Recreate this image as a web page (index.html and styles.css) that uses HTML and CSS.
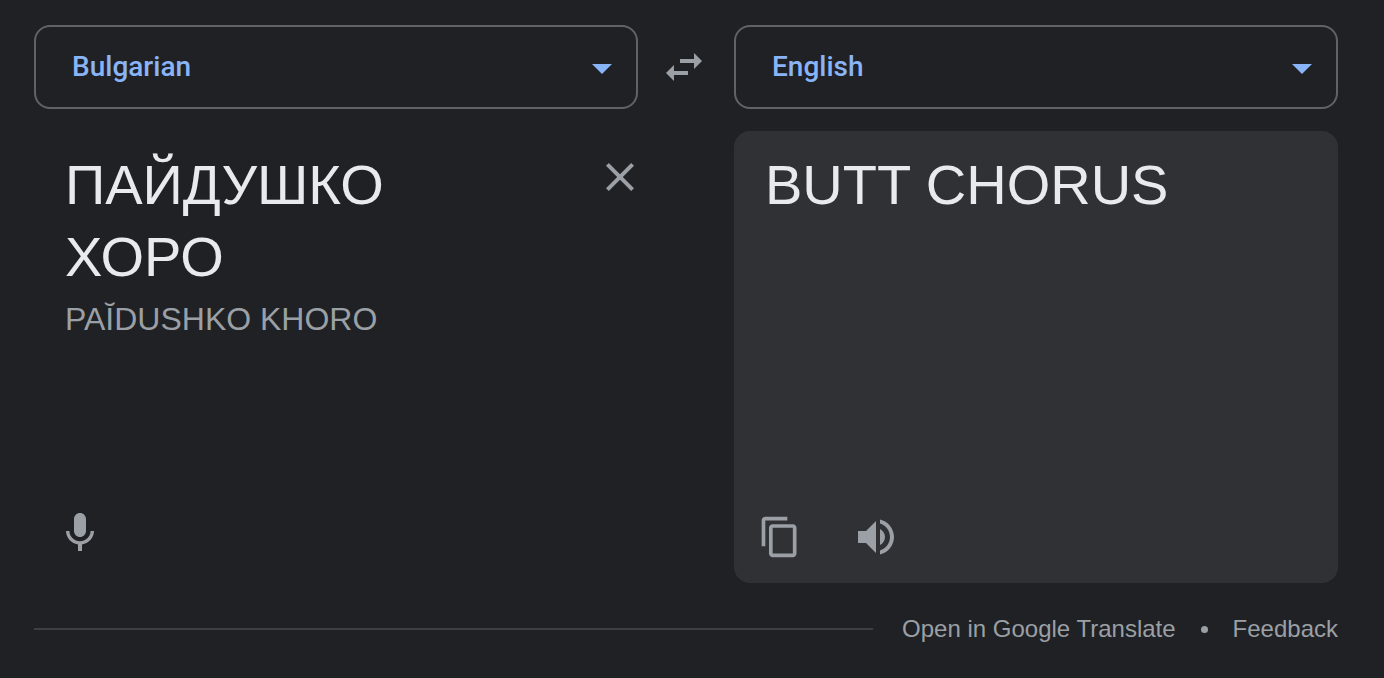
FILE: index.html
```html
<!DOCTYPE html>
<html lang="en">
<head>
<meta charset="utf-8">
<title>Translate</title>
<link rel="stylesheet" href="styles.css">
</head>
<body>
<div class="widget">
  <div class="langs">
    <div class="select"><span>Bulgarian</span><i class="caret"></i></div>
    <div class="swap">
      <svg width="48" height="48" viewBox="0 0 24 24"><path fill="currentColor" d="M6.99 11 3 15l3.99 4v-3H14v-2H6.99v-3zM21 9l-3.99-4v3H10v2h7.01v3L21 9z"/></svg>
    </div>
    <div class="select"><span>English</span><i class="caret"></i></div>
  </div>
  <div class="panes">
    <div class="pane source">
      <div class="text">
        <div class="main">ПАЙДУШКО<br>ХОРО</div>
        <div class="translit">PAĬDUSHKO KHORO</div>
      </div>
      <svg class="close" width="48" height="48" viewBox="0 0 24 24"><path fill="currentColor" d="M19 6.41 17.59 5 12 10.59 6.41 5 5 6.41 10.59 12 5 17.59 6.41 19 12 13.41 17.59 19 19 17.59 13.41 12z"/></svg>
      <div class="tools">
        <svg width="48" height="48" viewBox="0 0 24 24"><path fill="currentColor" d="M12 14c1.66 0 3-1.34 3-3V5c0-1.66-1.34-3-3-3S9 3.34 9 5v6c0 1.66 1.34 3 3 3zm5.3-3c0 3-2.54 5.1-5.3 5.1S6.7 14 6.7 11H5c0 3.41 2.72 6.23 6 6.72V21h2v-3.28c3.28-.48 6-3.3 6-6.72h-1.700z"/></svg>
      </div>
    </div>
    <div class="pane target">
      <div class="text"><div class="main">BUTT CHORUS</div></div>
      <div class="tools">
        <svg width="44" height="44" viewBox="0 0 24 24"><path fill="currentColor" d="M16 1H4c-1.100 0-2 .9-2 2v14h2V3h12V1zm3 4H8c-1.100 0-2 .9-2 2v14c0 1.100.9 2 2 2h11c1.100 0 2-.9 2-2V7c0-1.100-.9-2-2-2zm0 16H8V7h11v14z"/></svg>
        <svg width="48" height="48" viewBox="0 0 24 24"><path fill="currentColor" d="M3 9v6h4l5 5V4L7 9H3zm13.500 3c0-1.770-1.020-3.290-2.500-4.030v8.050c1.480-.73 2.500-2.250 2.500-4.020zM14 3.230v2.060c2.890.86 5 3.540 5 6.710s-2.110 5.850-5 6.710v2.060c4.010-.91 7-4.490 7-8.770s-2.990-7.860-7-8.770z"/></svg>
      </div>
    </div>
  </div>
  <div class="foot">
    <div class="rule"></div>
    <a>Open in Google Translate</a>
    <span class="dot"></span>
    <a>Feedback</a>
  </div>
</div>
</body>
</html>
```
FILE: styles.css
```css
* { box-sizing: border-box; }
html, body { margin: 0; height: 100%; }
body {
  background: #202124;
  font-family: "Liberation Sans", Arial, sans-serif;
  overflow: hidden;
}
.widget { padding: 25px 46px 0 34px; }
.langs { display: flex; align-items: center; }
.select {
  width: 604px;
  height: 84px;
  border: 2px solid #5f6368;
  border-radius: 16px;
  display: flex;
  align-items: center;
  justify-content: space-between;
  padding: 0 24px 2px 36px;
  color: #8ab4f8;
  font-family: Roboto, sans-serif;
  font-size: 28px;
  font-weight: 500;
}
.caret {
  width: 0; height: 0;
  border-left: 10px solid transparent;
  border-right: 10px solid transparent;
  border-top: 10px solid #8ab4f8;
  margin-top: 6px;
}
.swap { width: 96px; display: flex; justify-content: center; padding-right: 4px; color: #9aa0a6; }
.swap svg { display: block; }
.panes { display: flex; gap: 96px; margin-top: 22px; }
.pane {
  width: 604px;
  height: 452px;
  position: relative;
  border-radius: 16px;
  padding: 18px 31px;
}
.target { background: #303134; }
.main { font-size: 56px; line-height: 72px; color: #e8eaed; }
.translit { font-size: 32px; line-height: 44px; color: #9aa0a6; margin-top: 4px; }
.source .text { width: 420px; }
.close { position: absolute; right: -6px; top: 22px; color: #9aa0a6; }
.tools { position: absolute; left: 24px; bottom: 22px; display: flex; align-items: center; gap: 50px; color: #9aa0a6; }
.tools svg { display: block; }
.source .tools { left: 22px; bottom: 26px; }
.foot { display: flex; align-items: center; margin-top: 32px; color: #9aa0a6; font-size: 24px; }
.rule { flex: 1; height: 2px; background: #3c4043; margin-right: 29px; }
.dot { width: 7px; height: 7px; border-radius: 50%; background: #9aa0a6; margin: 0 25px; }
```
